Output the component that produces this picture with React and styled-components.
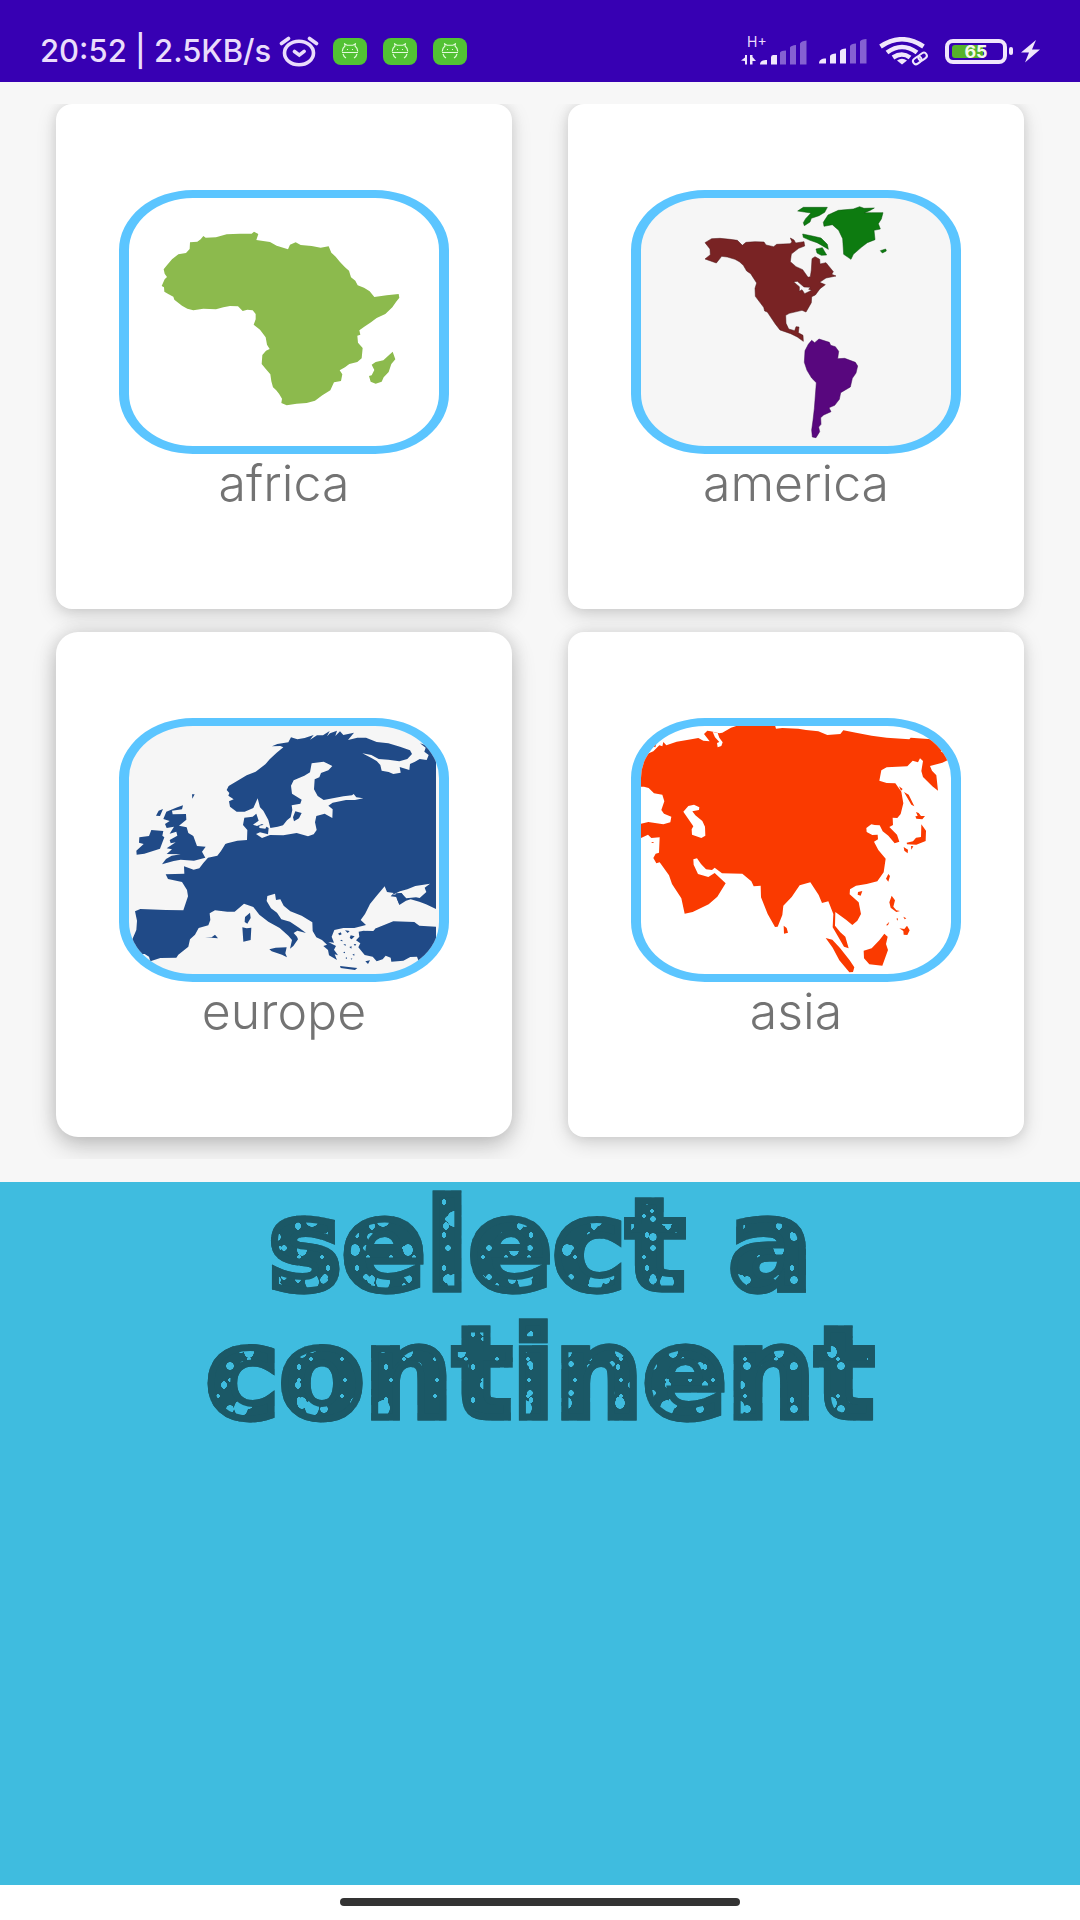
import React from "react";
import styled, { createGlobalStyle } from "styled-components";

const GlobalStyle = createGlobalStyle`
  *, *::before, *::after { box-sizing: border-box; }
  body { margin: 0; background: #ffffff; }
`;

const Screen = styled.div`
  display: flex;
  flex-direction: column;
  min-height: 100vh;
  background: #f7f7f7;
  font-family: Inter, "Open Sans", sans-serif;
`;

/* ---------- status bar ---------- */

const StatusBar = styled.header`
  display: flex;
  align-items: center;
  justify-content: space-between;
  height: 82px;
  padding: 20px 40px 0;
  background: #3700b3;
  color: #eadcfb;
`;

const StatusGroup = styled.div`
  display: flex;
  align-items: center;
  gap: ${(p) => p.$gap}px;
`;

const Clock = styled.span`
  font: 500 31px/32px Inter, Roboto, sans-serif;
  white-space: nowrap;
`;

const Badge = styled.span`
  display: flex;
  align-items: center;
  justify-content: center;
  width: 34px;
  height: 27px;
  border-radius: 8px;
  background: #52c234;
`;

const Badges = styled.div`
  display: flex;
  gap: 16px;
  margin-left: 6px;
`;

const Network = styled.div`
  display: flex;
  flex-direction: column;
  height: 32px;
`;

const NetworkType = styled.span`
  padding-left: 6px;
  font: 400 14px/14px Inter, Roboto, sans-serif;
`;

const NetworkBars = styled.div`
  margin-top: -12px;
`;

const Battery = styled.div`
  display: flex;
  align-items: center;
  gap: 2px;
  &::after {
    content: "";
    width: 4px;
    height: 8px;
    border-radius: 2px;
    background: #f0e6fc;
  }
`;

const BatteryShell = styled.div`
  width: 62px;
  height: 25px;
  padding: 2px 3px;
  border: 4px solid #f0e6fc;
  border-radius: 8px;
`;

const BatteryCharge = styled.div`
  height: 13px;
  border-radius: 3px;
  background: linear-gradient(90deg, #56b22a ${(p) => p.$level}%, transparent ${(p) => p.$level}%);
  color: #f4f8e8;
  font: 700 18px/13px Inter, Roboto, sans-serif;
  text-align: center;
`;

/* ---------- continent cards ---------- */

const CardGrid = styled.main`
  display: grid;
  grid-template-columns: repeat(2, 1fr);
  gap: 23px 56px;
  margin: 22px 0 23px;
  padding: 0 56px 22px;
  overflow: hidden;
`;

const Card = styled.button`
  display: flex;
  flex-direction: column;
  align-items: center;
  height: 505px;
  padding: 86px 0 0;
  border: 0;
  border-radius: ${(p) => (p.$raised ? 22 : 16)}px;
  background: #ffffff;
  box-shadow: ${(p) =>
    p.$raised
      ? "0 10px 24px rgba(0,0,0,.19), 0 0 18px rgba(0,0,0,.13)"
      : "0 6px 20px rgba(0,0,0,.15), 0 0 12px rgba(0,0,0,.09)"};
  font-family: inherit;
  cursor: pointer;
`;

const Frame = styled.span`
  display: block;
  width: 330px;
  height: 264px;
  overflow: hidden;
  border: solid #5bc5ff;
  border-width: 8px 10px;
  border-radius: 74px / 60px;
  background: ${(p) => p.$fill};
  & > svg { display: block; width: 100%; height: 100%; }
`;

const CardLabel = styled.span`
  color: #737373;
  font-size: 50px;
  font-weight: 300;
  line-height: 58px;
`;

/* ---------- prompt ---------- */

const Prompt = styled.section`
  flex: 1;
  padding: 0 130px;
  background: #3fbcdf;
`;

const PromptTitle = styled.h1`
  margin: 0;
  text-align: center;
  font: 700 124px/128px "DejaVu Sans", Inter, sans-serif;
  color: transparent;
  -webkit-text-stroke: 7px #1b5866;
  stroke-linejoin: round;
  background-color: #1b5866;
  background-image:
    radial-gradient(ellipse 5px 6px at 13px 17px, #3fbcdf 92%, transparent),
    radial-gradient(ellipse 3px 3px at 31px 8px, #3fbcdf 90%, transparent),
    radial-gradient(ellipse 7px 8px at 40px 37px, #3fbcdf 94%, transparent),
    radial-gradient(ellipse 3px 4px at 20px 44px, #3fbcdf 90%, transparent),
    radial-gradient(ellipse 2px 2px at 8px 34px, #3fbcdf 90%, transparent),
    radial-gradient(ellipse 2px 2px at 26px 29px, #3fbcdf 90%, transparent),
    radial-gradient(ellipse 4px 4px at 6px 12px, #3fbcdf 90%, transparent),
    radial-gradient(ellipse 2px 3px at 24px 20px, #3fbcdf 90%, transparent);
  background-size: 53px 51px, 41px 29px, 71px 63px, 37px 53px, 23px 41px, 31px 37px, 47px 43px, 29px 33px;
  -webkit-background-clip: text;
  background-clip: text;
`;

/* ---------- gesture bar ---------- */

const NavBar = styled.footer`
  display: flex;
  justify-content: center;
  height: 35px;
  padding-top: 13px;
  background: #ffffff;
`;

const NavHandle = styled.span`
  width: 37%;
  height: 8px;
  border-radius: 4px;
  background: #333333;
`;

/* ---------- drawings ---------- */

const AlarmIcon = () => (
  <svg width="40" height="31" viewBox="0 0 40 31" fill="none" stroke="#eadcfb" strokeWidth="3.6" strokeLinecap="round" aria-hidden="true">
    <ellipse cx="20" cy="17" rx="14.5" ry="11.8" />
    <path d="M15.5 15.5l4.8 3.6 4.8-3.8M2.5 7.5l7-5M37.5 7.5l-7-5" />
  </svg>
);

const DroidIcon = () => (
  <svg width="18" height="16" viewBox="0 0 18 16" fill="none" stroke="#e4fadb" strokeWidth="1.1" aria-hidden="true">
    <path d="M1 9.5h16M1.2 8.5C1.6 5.500 2.500 4 4 3L3.600.800 6 2.200h6L14.400.8 14 3c1.500 1 2.400 2.500 2.800 5.500M2 11c.4 1.600 1.400 3 3 4M16 11c-.4 1.600-1.400 3-3 4M6.500 6v1M11.500 6v1" />
  </svg>
);

const LinkArrows = () => (
  <svg width="66" height="28" viewBox="0 0 66 28" fill="#f0e6fc" aria-hidden="true">
    <path d="M6 18v9.500H4V24L0 23.500 4 20.500V18zM9 18h2.500v2l3.500 4h-3.500v3.500H9z" />
    <path d="M19 27.500c0-3 2-4.500 7-4.500v4.500zM30 20.500q0-2.500 2-2.500h4v9.500h-6z" />
    <path opacity=".42" d="M39 15.500q1-2 6-2v14h-6zM49 10.500q1-2 6-2.500v19.500h-6zM59 6.500Q60 4 65.500 3.500v24H59z" />
  </svg>
);

const SignalBars = () => (
  <svg width="48" height="25" viewBox="0 0 48 25" fill="#f0e6fc" aria-hidden="true">
    <path d="M0 24.500c0-3 2-5 7-5v5zM11 17q1-2.500 6-2.500v10h-6zM21 12q1-2.500 6-2.500v15h-6z" />
    <path opacity=".42" d="M31 7q1-2.500 6-2.500v20h-6zM41 2.500Q42 0 47.500 0v24.500H41z" />
  </svg>
);

const WifiIcon = () => (
  <svg width="54" height="29" viewBox="0 0 54 29" fill="none" stroke="#f0e6fc" aria-hidden="true">
    <path strokeWidth="4.600" d="M1.500 9.500Q23 -5 44.500 9.500M8 15.500Q23 4.500 38 15.500M14 20.500q9-6 17 0" />
    <path fill="#f0e6fc" stroke="none" d="M18 23.500q5-3.500 10 0l-5 4z" />
    <g strokeWidth="2" transform="rotate(-35 41 22)">
      <rect x="33.500" y="18.500" width="9" height="6" rx="3" />
      <rect x="40" y="18.500" width="9" height="6" rx="3" />
    </g>
  </svg>
);

const BoltIcon = () => (
  <svg width="19" height="24" viewBox="0 0 19 24" fill="#f0e6fc" aria-hidden="true">
    <path d="M15 1L0 13.500h8L4 23.500 19 10.500h-8z" />
  </svg>
);

const AfricaMap = () => (
  <svg viewBox="57 54 930 744" preserveAspectRatio="none" fill="#8cba4d" aria-hidden="true">
    <path d="M240 187L262 185 272 178 280 168 287 173 318 172 350 163 390 161 425 161 432 155 445 162 439 180 480 186 500 197 534 208 540 194 557 187 572 195 605 198 632 203 656 199 664 218 677 230 690 246 705 262 717 272 723 292 736 302 743 316 762 323 779 334 793 351 830 346 866 342 868 353 858 366 847 382 826 402 800 414 783 427 765 439 748 451 751 464 742 467 744 488 758 504 755 535 742 546 718 552 705 562 689 571 697 583 693 603 672 607 661 631 637 646 615 662 590 669 560 671 530 676 514 669 516 656 507 641 498 630 489 622 484 604 481 583 468 568 455 552 457 525 468 512 479 507 471 494 467 472 450 449 431 434 437 418 437 402 428 391 412 389 398 393 384 379 360 378 340 382 318 388 280 386 250 391 232 386 216 377 193 359 190 350 176 343 163 335 162 322 155 318 164 298 171 291 164 281 161 268 172 254 186 238 205 223 228 219 239 207z" />
    <path d="M848 515L856 538 844 552 836 576 821 592 815 605 797 611 782 605 777 588 785 586 793 570 785 554 797 546 820 541z" />
  </svg>
);

const AmericaMap = () => (
  <svg viewBox="63 54 930 744" preserveAspectRatio="none" aria-hidden="true">
    <path fill="#792324" stroke="#4f1517" strokeWidth="1.500" fillRule="evenodd" d="M255 188L275 176 300 175 330 178 352 181 367 196 378 187 405 185 432 186 438 195 461 200 470 193 510 191 516 186 511 174 522 180 527 189 552 185 554 198 536 205 514 222 511 245 528 260 548 269 564 292 571 290 574 270 576 236 585 230 599 238 600 252 618 248 626 258 640 275 635 283 648 288 618 294 599 307 616 314 600 326 586 345 575 350 574 368 558 396 546 391 508 400 497 406 498 430 506 447 524 452 528 440 537 441 535 458 549 466 550 484 532 471 512 461 480 450 466 432 442 396 434 393 431 382 406 349 405 325 410 309 392 281 380 273 370 256 358 245 345 238 322 231 305 229 289 249 255 237 271 224 270 207zM521 306L532 304 552 321 571 322 566 328 575 331 554 341 546 329 538 334 538 320z" />
    <g fill="#0d7b10" stroke="#075409" strokeWidth="1.500">
      <path d="M610 127L624 105 655 91 700 87 719 80 732 85 763 84 749 92 733 98 754 98 789 98 784 117 775 131 781 147 762 151 765 179 742 188 724 202 700 223 693 238 671 223 668 176 656 151 637 134 612 139z" />
      <path d="M533 93L550 82 622 82 614 97 597 107 574 115 570 126 553 137 550 128 557 116 573 99zM548 162L577 168 603 174 622 193 625 208 607 197 591 188 570 181 550 172zM588 207L607 203 620 225 604 226 591 219zM781 212L797 207 799 213 787 219z" />
    </g>
    <path fill="#58077e" stroke="#3d0558" strokeWidth="1.500" d="M555 512L565 493 575 481 584 488 597 477 628 487 632 496 646 500 656 514 653 536 674 535 706 547 713 558 708 579 697 595 691 621 662 638 658 658 644 676 627 683 633 695 611 705 602 713 603 733 596 741 599 755 588 773 577 771 575 750 579 721 583 686 589 608 575 594 561 571 553 547z" />
  </svg>
);

const EuropeMap = () => (
  <svg viewBox="57 48 930 744" preserveAspectRatio="none" fill="#204a87" aria-hidden="true">
    <path d="M978 105L961 100 948 106 930 100 947 113 943 125 956 135 950 150 929 147 915 155 900 162 898 180 869 171 872 188 850 192 836 186 815 182 811 165 800 153 783 143 757 130 784 135 806 147 835 149 868 154 892 147 906 132 900 121 870 110 835 100 800 96 768 83 742 83 714 90 732 68 700 75 690 64 676 78 681 62 660 70 651 79 659 63 639 76 621 76 600 89 611 75 584 84 562 88 543 82 535 97 521 99 502 102 486 109 511 108 520 112 500 128 479 148 466 163 437 185 410 196 385 211 356 228 350 240 358 249 355 257 371 268 357 274 360 290 380 305 404 305 430 294 443 265 450 292 460 302 475 330 481 354 503 350 519 346 531 331 542 322 547 300 545 286 571 281 575 269 546 251 543 227 551 211 583 197 600 187 605 160 641 155 667 168 655 181 633 189 628 202 614 208 612 238 623 258 641 270 700 259 726 256 731 252 739 262 760 265 735 270 708 270 668 278 655 287 668 298 667 324 644 311 619 318 615 337 620 360 611 373 594 379 560 369 520 376 480 375 456 384 438 372 450 367 474 373 476 354 456 342 441 348 429 344 446 332 439 311 428 320 403 323 399 345 412 360 411 390 382 392 352 400 346 402 333 423 322 437 294 443 280 459 268 475 251 479 222 469 223 491 167 493 174 507 216 516 231 540 234 559 220 601 168 600 91 597 75 604 81 632 79 660 67 688 62 715 76 733 104 732 117 740 121 754 151 744 199 743 205 734 235 710 240 688 255 674 266 654 295 646 301 630 299 610 315 601 352 605 374 605 402 581 430 591 448 614 475 635 509 654 535 677 546 690 540 716 550 708 564 688 561 680 551 669 562 662 588 669 567 653 540 635 514 628 501 608 483 595 470 573 472 558 495 551 498 570 511 568 521 587 541 604 575 617 607 637 608 663 619 682 636 690 651 704 640 708 654 720 657 736 681 750 674 733 684 736 672 719 678 708 655 696 672 698 665 680 673 660 700 654 733 654 768 645 752 630 765 612 780 582 800 557 824 529 831 546 851 549 842 559 859 561 868 585 888 572 902 568 928 575 948 583 978 597z" />
    <path d="M978 650L928 647 913 636 850 634 800 654 772 660 746 665 748 680 738 691 751 700 745 712 764 735 788 740 800 754 818 748 827 737 842 743 844 755 880 752 901 741 921 740 926 754 944 739 978 739zM478 718L497 713 530 712 526 730 531 742 516 734 485 724zM397 652L410 655 424 653 422 690 400 695zM405 621L420 608 422 624 412 641 404 636zM690 768L742 774 735 780 692 774zM285 682L305 682 315 674 324 685zM766 754L780 751 774 762zM246 253L254 253 247 266zM549 322L556 304 575 309 567 325 552 334z" />
    <path d="M88 382L117 378 124 360 160 363 157 377 163 382 150 416 103 431 80 434 79 422 101 402 87 398zM138 317L146 302 159 297 150 318zM169 305L202 292 219 286 216 298 186 302 188 313 228 312 229 329 207 347 230 352 235 369 250 378 261 408 287 410 276 425 286 443 252 452 212 449 191 453 156 463 168 447 185 437 212 433 170 432 186 418 170 415 197 397 182 400 179 390 202 377 199 365 179 371 192 350 170 354 165 342 179 333 160 327z" />
    <path fill="#f6f6f6" d="M760 662L782 652 797 655 790 663zM845 556L870 544 892 538 916 528 960 521 944 533 949 546 929 564 918 562 889 565 873 549zM448 347L474 342 466 356 448 354z" />
    <path d="M857 550L875 549 888 568 868 583 861 568z" />
    <path d="M684 671l8-4 3 6-6 3zM705 661l14 2-6 6zM722 676l12 3-9 9-6-4zM700 704l6-2 2 5zM718 711l7-2-1 7zM699 727l6-2v5zM727 734l6-3v6zM706 744l5-2v5zM731 702l8 1-4 5zM690 692l6-3 2 5zM722 746l5-1-2 4z" />
  </svg>
);

const AsiaMap = () => (
  <svg viewBox="63 48 930 744" preserveAspectRatio="none" fill="#fa3a00" aria-hidden="true">
    <path fillRule="evenodd" d="M50 130L83 131 100 124 118 106 127 109 130 96 139 106 170 95 201 90 235 84 250 92 269 94 252 72 262 62 272 64 298 70 307 68 333 53 355 46 465 46 468 56 487 54 535 56 558 60 595 64 622 75 661 72 670 61 708 68 755 77 800 83 868 88 872 83 935 88 962 101 972 118 962 124 980 133 990 147 967 158 930 168 936 182 949 196 954 242 937 229 909 201 904 183 909 153 900 145 894 157 878 152 862 169 800 172 784 181 778 212 800 219 826 220 844 245 850 280 842 312 832 324 818 323 819 345 808 351 831 374 838 395 824 400 805 377 788 364 779 346 764 345 754 343 739 354 740 366 757 375 773 374 774 388 762 395 775 420 797 446 791 487 772 514 740 522 708 527 690 538 689 553 716 577 723 612 712 632 697 645 678 629 646 606 645 647 661 667 676 680 686 715 672 710 638 652 640 612 625 574 606 579 596 555 571 517 539 526 515 561 490 587 487 615 473 650 465 651 443 612 423 562 422 527 401 529 394 514 367 491 306 490 284 473 276 480 258 478 243 462 231 445 220 448 221 464 234 492 265 501 284 489 317 520 292 560 266 583 218 606 194 611 184 565 156 522 147 496 119 457 109 460 100 444 107 431 117 428 119 382 94 384 84 374 63 384 50 384 50 344 85 336 130 343 151 337 154 320 132 311 124 300 133 274 127 254 102 250 86 234 72 230 50 230z
      M190 305L205 288 222 284 238 292 237 300 217 304 226 316 247 333 255 350 256 377 244 384 216 374 215 358 220 349z" />
    <path d="M491 647L500 654 504 668 492 671zM617 684L637 689 660 714 689 751 703 772 699 786 688 787 658 751 638 713zM731 722L755 715 778 691 793 671 803 680 798 702 804 720 787 767 748 763 732 745zM838 655L853 657 861 647 869 661 862 675 851 674 850 663zM808 577L815 557 825 571 820 590 829 601 840 603 829 606 812 593zM798 506L805 492 810 498 805 515zM714 546L727 543 722 557 713 554zM837 229L848 237 843 242zM852 246L866 254 883 289 874 284zM888 306L896 309 903 318 915 318 907 328 889 326 886 319 893 318zM904 343L918 362 917 393 889 404 861 403 860 398 879 394 888 383 903 381zM851 411L864 419 863 430 853 422zM873 408L880 409 874 419zM798 646L808 635 804 646zM829 626L834 625 833 632zM850 620L859 625 854 628z" />
    <path fill="#ffffff" d="M278 66L293 69 298 83 308 97 304 108 293 112 291 99 298 96 285 82z" />
    <path d="M94 101L109 101 106 112 90 108zM93 396L103 396 98 399z" />
  </svg>
);

const continents = [
  { name: "africa", Map: AfricaMap, fill: "#ffffff" },
  { name: "america", Map: AmericaMap, fill: "#f6f6f6" },
  { name: "europe", Map: EuropeMap, fill: "#f6f6f6", raised: true },
  { name: "asia", Map: AsiaMap, fill: "#ffffff" },
];

export default function App() {
  return (
    <Screen>
      <GlobalStyle />
      <StatusBar>
        <StatusGroup $gap={8}>
          <Clock>20:52 | 2.5KB/s</Clock>
          <AlarmIcon />
          <Badges>
            {[0, 1, 2].map((n) => (
              <Badge key={n}>
                <DroidIcon />
              </Badge>
            ))}
          </Badges>
        </StatusGroup>
        <StatusGroup $gap={12}>
          <Network>
            <NetworkType>H+</NetworkType>
            <NetworkBars>
              <LinkArrows />
            </NetworkBars>
          </Network>
          <SignalBars />
          <WifiIcon />
          <StatusGroup $gap={8}>
            <Battery>
              <BatteryShell>
                <BatteryCharge $level={65}>65</BatteryCharge>
              </BatteryShell>
            </Battery>
            <BoltIcon />
          </StatusGroup>
        </StatusGroup>
      </StatusBar>

      <CardGrid>
        {continents.map(({ name, Map, fill, raised }) => (
          <Card key={name} type="button" $raised={raised}>
            <Frame $fill={fill}>
              <Map />
            </Frame>
            <CardLabel>{name}</CardLabel>
          </Card>
        ))}
      </CardGrid>

      <Prompt>
        <PromptTitle>select a continent</PromptTitle>
      </Prompt>

      <NavBar>
        <NavHandle />
      </NavBar>
    </Screen>
  );
}
